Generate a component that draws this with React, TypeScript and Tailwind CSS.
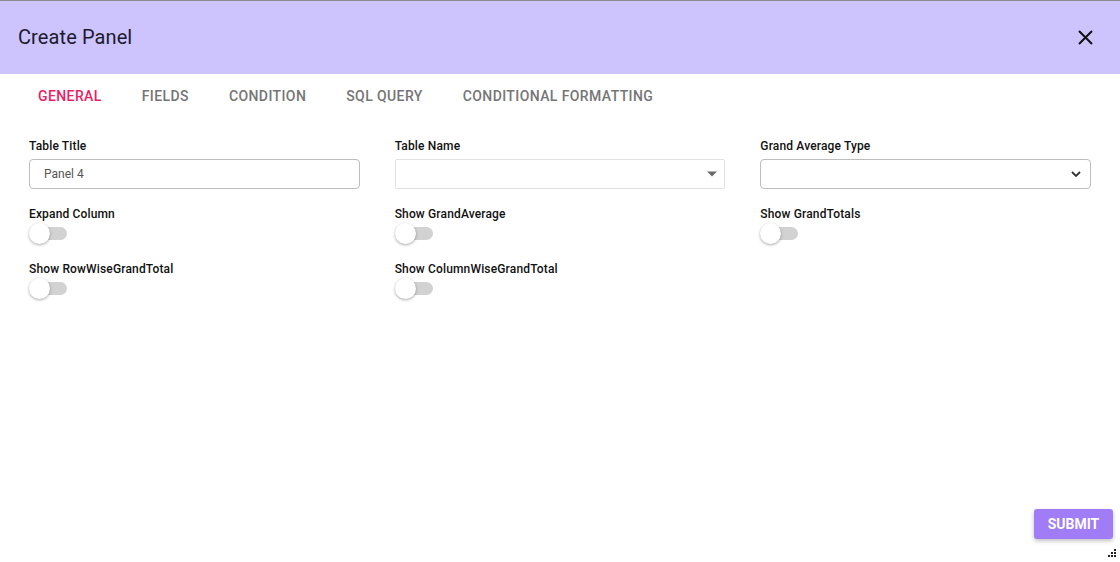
import React, { useState } from 'react';

const TABS = ['General', 'Fields', 'Condition', 'SQL Query', 'Conditional Formatting'];

function Toggle({ on = false }: { on?: boolean }) {
  return (
    <div className="relative w-[38px] h-[21px]">
      <div className={`absolute left-[4px] right-0 top-[4px] h-[13px] rounded-full ${on ? 'bg-[#f48fb1]' : 'bg-[#d2d2d2]'}`} />
      <div
        className={`absolute top-0 w-[21px] h-[21px] rounded-full bg-white shadow-[0_1px_3px_rgba(0,0,0,0.35)] ${on ? 'left-[17px]' : 'left-0'}`}
      />
    </div>
  );
}

function Label({ children }: { children: React.ReactNode }) {
  return <div className="text-[12px] leading-[14px] font-medium tracking-[0.15px] text-[#111]">{children}</div>;
}

export default function App() {
  const [tab, setTab] = useState(0);

  return (
    <div className="relative w-[1120px] h-[562px] bg-white border-t border-[#8d8d8d] flex flex-col font-['Roboto',sans-serif] overflow-hidden">
      {/* header */}
      <header className="h-[73px] bg-[#cdc4fe] flex items-center justify-between pl-[18px] pr-[27px] shrink-0">
        <h1 className="text-[20px] text-[#1b1a2e] tracking-[0.1px] -translate-y-[1px]">Create Panel</h1>
        <button className="w-[16px] h-[16px] flex items-center justify-center">
          <svg width="15" height="15" viewBox="0 0 15 15">
            <path d="M1 1 L14 14 M14 1 L1 14" stroke="#111" strokeWidth="2" />
          </svg>
        </button>
      </header>

      {/* tabs */}
      <nav className="h-[44px] flex items-center pl-[18px] shrink-0">
        {TABS.map((t, i) => (
          <button
            key={t}
            onClick={() => setTab(i)}
            className={`px-[20px] text-[14px] font-medium uppercase tracking-[0.4px] ${tab === i ? 'text-[#e91e63]' : 'text-[#757575]'}`}
          >
            {t}
          </button>
        ))}
      </nav>

      {/* form */}
      <main className="flex-1 px-[29px] pt-[21px]">
        <div className="grid grid-cols-3 gap-x-[35px] gap-y-[18px]">
          <div>
            <Label>Table Title</Label>
            <input
              defaultValue="Panel 4"
              className="mt-[6px] w-full h-[30px] border border-[#bdbdbd] rounded-[4px] pl-[14px] text-[12px] text-[#555] outline-none"
            />
          </div>
          <div>
            <Label>Table Name</Label>
            <div className="mt-[6px] w-full h-[30px] border border-[#e2e2e2] rounded-[2px] flex items-center justify-end pr-[6px]">
              <svg width="12" height="6" viewBox="0 0 12 6">
                <path d="M1 0.5 L11 0.5 L6 5.5 Z" fill="#6b6b6b" />
              </svg>
            </div>
          </div>
          <div>
            <Label>Grand Average Type</Label>
            <div className="mt-[6px] w-full h-[30px] border border-[#bdbdbd] rounded-[4px] flex items-center justify-end pr-[9px]">
              <svg width="10" height="6" viewBox="0 0 10 6">
                <path d="M1 1 L5 5 L9 1" fill="none" stroke="#333" strokeWidth="1.8" />
              </svg>
            </div>
          </div>

          <div>
            <Label>Expand Column</Label>
            <div className="mt-[2px]"><Toggle /></div>
          </div>
          <div>
            <Label>Show GrandAverage</Label>
            <div className="mt-[2px]"><Toggle /></div>
          </div>
          <div>
            <Label>Show GrandTotals</Label>
            <div className="mt-[2px]"><Toggle /></div>
          </div>

          <div>
            <Label>Show RowWiseGrandTotal</Label>
            <div className="mt-[2px]"><Toggle /></div>
          </div>
          <div>
            <Label>Show ColumnWiseGrandTotal</Label>
            <div className="mt-[2px]"><Toggle /></div>
          </div>
        </div>
      </main>

      {/* footer */}
      <footer className="flex justify-end pr-[7px] pb-[23px] shrink-0">
        <button className="w-[79px] h-[30px] rounded-[3px] bg-[#a07cf6] text-white text-[14px] font-bold shadow-[0_2px_4px_rgba(0,0,0,0.25)]">
          SUBMIT
        </button>
      </footer>

      {/* resize handle */}
      <svg className="absolute right-[3px] bottom-[4px]" width="11" height="10" viewBox="0 0 11 10">
        <rect x="8" y="1" width="2" height="2" fill="#222" />
        <rect x="5" y="4" width="2" height="2" fill="#222" />
        <rect x="8" y="4" width="2" height="2" fill="#222" />
        <rect x="2" y="7" width="2" height="2" fill="#222" />
        <rect x="5" y="7" width="2" height="2" fill="#222" />
        <rect x="8" y="7" width="2" height="2" fill="#222" />
      </svg>
    </div>
  );
}
